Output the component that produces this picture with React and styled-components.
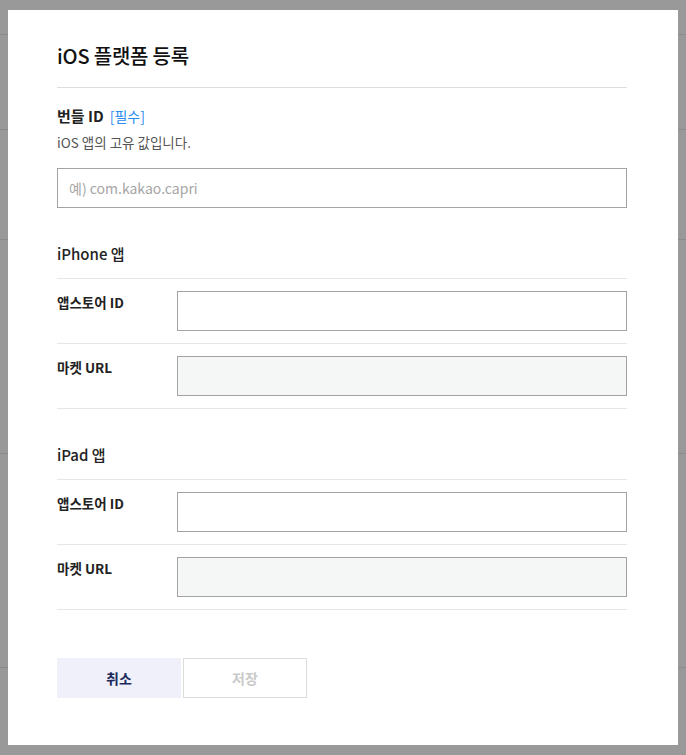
import React from 'react'
import styled, { createGlobalStyle } from 'styled-components'

const GlobalStyle = createGlobalStyle`
    html, body {
        margin: 0;
        padding: 0;
        background: #fff;
    }
    body {
        font-family: "Noto Sans CJK KR", "Noto Sans", sans-serif;
        color: #222;
    }
    * {
        box-sizing: border-box;
    }
`

// faint page that sits under the dimmed overlay
const BackPage = styled.div`
    height: 755px;
    overflow: hidden;
`

const BackRow = styled.div`
    height: ${props => props.h}px;
    border-bottom: 1px solid #e8e8e8;
`

const Overlay = styled.div`
    position: fixed;
    inset: 0;
    background: rgba(0, 0, 0, 0.4);
    display: flex;
    align-items: center;
    justify-content: center;
`

const Modal = styled.div`
    width: 670px;
    height: 735px;
    background: #fff;
    padding: 32px 51px 0 49px;
`

const Header = styled.div`
    border-bottom: 1px solid #dedede;
    padding-bottom: 17px;
`

const Title = styled.h2`
    margin: 0;
    font-size: 20px;
    line-height: 28px;
    font-weight: 500;
    color: #111;
    letter-spacing: -0.2px;
`

const Field = styled.div`
    padding-top: 17px;
`

const FieldLabel = styled.div`
    font-size: 15px;
    line-height: 22px;
    font-weight: 700;
    color: #222;
`

const Required = styled.span`
    font-size: 14px;
    font-weight: 400;
    color: #2b8cf0;
    margin-left: 6px;
`

const Desc = styled.p`
    margin: 5px 0 0;
    font-size: 13.5px;
    line-height: 20px;
    color: #555;
`

const Input = styled.input`
    display: block;
    width: ${props => (props.full ? '100%' : '450px')};
    height: 40px;
    margin: ${props => (props.full ? '16px 0 0' : '0')};
    padding: 0 11px;
    border: 1px solid #a3a3a3;
    border-radius: 0;
    outline: none;
    font-family: inherit;
    font-size: 14px;
    color: #222;
    background: ${props => (props.disabled ? '#f5f6f6' : '#fff')};

    &::placeholder {
        color: #a6a6a6;
    }
`

const Section = styled.div`
    margin-top: ${props => props.top}px;
`

const SectionTitle = styled.div`
    font-size: 15px;
    line-height: 22px;
    font-weight: 500;
    color: #222;
    padding-bottom: 13px;
    border-bottom: 1px solid #e6e6e6;
`

const Row = styled.div`
    display: flex;
    align-items: flex-start;
    padding: 12px 0;
    border-bottom: 1px solid #e6e6e6;
`

const RowLabel = styled.div`
    width: 120px;
    flex-shrink: 0;
    font-size: 13.5px;
    line-height: 22px;
    font-weight: 700;
    color: #222;
`

const Buttons = styled.div`
    display: flex;
    gap: 2px;
    margin-top: 48px;
`

const Button = styled.button`
    width: 124px;
    height: 40px;
    font-family: inherit;
    font-size: 14px;
    font-weight: 700;
    cursor: pointer;
    border: 1px solid ${props => (props.primary ? '#eff0f9' : '#dcdcdc')};
    background: ${props => (props.primary ? '#eff0f9' : '#fff')};
    color: ${props => (props.primary ? '#1c2a5c' : '#c9c9c9')};
`

const apps = [
    { name: 'iPhone 앱', top: 35 },
    { name: 'iPad 앱', top: 35 }
]

export default function App() {
    return (
        <>
            <GlobalStyle />
            <BackPage>
                <BackRow h={35} />
                <BackRow h={95} />
                <BackRow h={110} />
                <BackRow h={214} />
                <BackRow h={214} />
            </BackPage>
            <Overlay>
                <Modal>
                    <Header>
                        <Title>iOS 플랫폼 등록</Title>
                    </Header>

                    <Field>
                        <FieldLabel>
                            번들 ID<Required>[필수]</Required>
                        </FieldLabel>
                        <Desc>iOS 앱의 고유 값입니다.</Desc>
                        <Input full placeholder='예) com.kakao.capri' />
                    </Field>

                    {apps.map(app => (
                        <Section key={app.name} top={app.top}>
                            <SectionTitle>{app.name}</SectionTitle>
                            <Row>
                                <RowLabel>앱스토어 ID</RowLabel>
                                <Input />
                            </Row>
                            <Row>
                                <RowLabel>마켓 URL</RowLabel>
                                <Input disabled />
                            </Row>
                        </Section>
                    ))}

                    <Buttons>
                        <Button primary>취소</Button>
                        <Button disabled>저장</Button>
                    </Buttons>
                </Modal>
            </Overlay>
        </>
    )
}
